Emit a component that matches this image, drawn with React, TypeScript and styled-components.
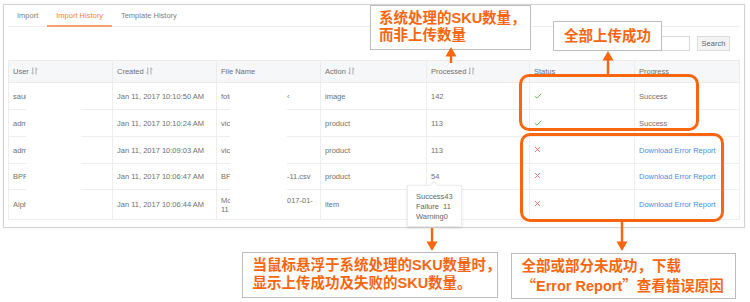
import React from "react";
import styled, { createGlobalStyle, css } from "styled-components";

const ORANGE = "#fa660f";

const GlobalStyle = createGlobalStyle`
    html, body {
        margin: 0;
        padding: 0;
        background: #fff;
    }

    body {
        font-family: "Liberation Sans", Arial, sans-serif;
    }
`;

const Stage = styled.div`
    box-sizing: border-box;
    height: 302px;
    overflow: hidden;
    padding: 4px 0 0 3px;
    position: relative;
    width: 750px;
`;

const Panel = styled.div`
    border: 1px solid #d4d4d4;
    box-shadow: 0 0 2px rgba(0, 0, 0, 0.08);
    box-sizing: border-box;
    display: flex;
    flex-direction: column;
    height: 224px;
    padding: 0 5px 0 4px;
    width: 742px;
`;

const TabBar = styled.div`
    border-bottom: 1px solid #ececec;
    display: flex;
    height: 21px;
`;

const Tab = styled.div<{ $active?: boolean }>`
    border-bottom: 2px solid ${(p) => (p.$active ? "#f9a16a" : "transparent")};
    color: ${(p) => (p.$active ? "#f5853a" : "#808080")};
    font-size: 7.5px;
    line-height: 21px;
    margin-bottom: -1px;
    padding: 0 9px;
`;

const Toolbar = styled.div`
    align-items: center;
    display: flex;
    gap: 7px;
    height: 15px;
    justify-content: flex-end;
    margin-top: 9px;
    padding-right: 9px;
`;

const SearchInput = styled.div`
    border: 1px solid #d9d9d9;
    box-sizing: border-box;
    height: 15px;
    width: 130px;
`;

const SearchButton = styled.button`
    background: #f4f4f4;
    border: 1px solid #dcdcdc;
    box-sizing: border-box;
    color: #666;
    font-family: "Liberation Sans", Arial, sans-serif;
    font-size: 7.5px;
    height: 15px;
    padding: 0;
    width: 33px;
`;

const TableWrap = styled.div`
    margin-top: 9px;
    position: relative;
`;

const Table = styled.table`
    border-collapse: collapse;
    color: #707070;
    font-size: 7.5px;
    table-layout: fixed;
    width: 731px;
`;

const Tr = styled.tr<{ $h: number }>`
    height: ${(p) => p.$h}px;
`;

const Th = styled.th`
    background: #f6f7f9;
    border: 1px solid #ebebeb;
    font-weight: normal;
    padding: 0 4px;
    text-align: left;
    white-space: nowrap;
`;

const Td = styled.td`
    border: 1px solid #eeeeee;
    line-height: 9px;
    padding: 0 4px;
    white-space: nowrap;
`;

const FileCell = styled.div`
    align-items: flex-start;
    display: flex;
`;

const FileHead = styled.span`
    width: 66px;
`;

const ErrorLink = styled.span`
    color: #4a8fe0;
`;

const SortMark = styled.svg`
    margin-left: 2px;
    vertical-align: -1px;
`;

const Redact = styled.div<{ $x: number; $w: number }>`
    background: #fff;
    height: 135px;
    left: ${(p) => p.$x}px;
    position: absolute;
    top: 23px;
    width: ${(p) => p.$w}px;
`;

const Tooltip = styled.div`
    background: #fff;
    border: 1px solid #ececec;
    box-shadow: 0 1px 3px rgba(0, 0, 0, 0.1);
    box-sizing: border-box;
    color: #666;
    font-size: 7.5px;
    height: 42px;
    left: 399px;
    line-height: 10px;
    padding: 6px 0 0 8px;
    position: absolute;
    top: 125px;
    white-space: pre;
    width: 55px;

    &::before {
        background: #fff;
        border-left: 1px solid #ececec;
        border-top: 1px solid #ececec;
        content: "";
        height: 5px;
        left: 23px;
        position: absolute;
        top: -4px;
        transform: rotate(45deg);
        width: 5px;
    }
`;

const noteText = css`
    background: #fff;
    border: 1.5px solid #bdbdbd;
    box-sizing: border-box;
    color: ${ORANGE};
    font-family: "Liberation Sans", "Noto Sans CJK SC", sans-serif;
    font-size: 14.5px;
    font-weight: bold;
    line-height: 17px;
    white-space: nowrap;
`;

// callouts laid over the screenshot
const Callout = styled.div<{ $x: number; $y: number; $w: number; $h: number; $center?: boolean }>`
    ${noteText}
    height: ${(p) => p.$h}px;
    left: ${(p) => p.$x}px;
    padding: 4px 0 0 8px;
    position: absolute;
    top: ${(p) => p.$y}px;
    width: ${(p) => p.$w}px;

    ${(p) =>
        p.$center &&
        css`
            align-items: center;
            display: flex;
            justify-content: center;
            padding: 0;
        `}
`;

// callouts under the panel
const NoteRow = styled.div`
    align-items: flex-start;
    display: flex;
    gap: 13px;
    margin-top: 24px;
    padding-left: 239px;
`;

const Note = styled.div<{ $w: number; $offset?: number }>`
    ${noteText}
    height: 46px;
    line-height: 17.5px;
    margin-top: ${(p) => p.$offset ?? 0}px;
    padding: 4px 0 0 9.5px;
    width: ${(p) => p.$w}px;
`;

const CjkQuote = styled.span`
    font-family: "Noto Sans CJK SC", sans-serif;
`;

const Highlight = styled.div<{ $x: number; $y: number; $w: number; $h: number }>`
    border: 3px solid ${ORANGE};
    border-radius: 10px;
    box-sizing: border-box;
    height: ${(p) => p.$h}px;
    left: ${(p) => p.$x}px;
    position: absolute;
    top: ${(p) => p.$y}px;
    width: ${(p) => p.$w}px;
`;

const ArrowSvg = styled.svg<{ $x: number; $y: number }>`
    left: ${(p) => p.$x - 6}px;
    position: absolute;
    top: ${(p) => p.$y}px;
`;

type ArrowProps = { x: number; tip: number; tail: number };

const Arrow: React.FC<ArrowProps> = ({ x, tip, tail }) => {
    const up = tip < tail;
    const len = Math.abs(tail - tip);
    const top = Math.min(tip, tail);
    return (
        <ArrowSvg $x={x} $y={top} width={12} height={len} viewBox={`0 0 12 ${len}`}>
            {up ? (
                <>
                    <polygon points="6,0 0.5,9.5 11.5,9.5" fill={ORANGE} />
                    <rect x={4.8} y={9} width={2.4} height={len - 9} fill={ORANGE} />
                </>
            ) : (
                <>
                    <rect x={4.8} y={0} width={2.4} height={len - 9} fill={ORANGE} />
                    <polygon points={`6,${len} 0.5,${len - 9.5} 11.5,${len - 9.5}`} fill={ORANGE} />
                </>
            )}
        </ArrowSvg>
    );
};

const Sort = () => (
    <SortMark width={7} height={8} viewBox="0 0 7 8">
        <path d="M1.8 0.5V7.2L0.4 5.6M5 7.5V0.8L6.4 2.4" stroke="#999" strokeWidth={0.8} fill="none" />
    </SortMark>
);

const Check = () => (
    <svg width={8} height={6} viewBox="0 0 8 6">
        <path d="M0.8 3.2L3 5.2L7.2 0.8" stroke="#5cc45c" strokeWidth={1} fill="none" />
    </svg>
);

const Cross = () => (
    <svg width={7} height={7} viewBox="0 0 7 7">
        <path d="M1 1L6 6M6 1L1 6" stroke="#ee6a6a" strokeWidth={0.9} fill="none" />
    </svg>
);

type Row = {
    user: string;
    created: string;
    fileHead: React.ReactNode;
    fileTail: string;
    action: string;
    processed: string;
    ok: boolean;
    h: number;
};

const rows: Row[] = [
    { user: "saumya", created: "Jan 11, 2017 10:10:50 AM", fileHead: "fotos", fileTail: "‹", action: "image", processed: "142", ok: true, h: 27 },
    { user: "admin", created: "Jan 11, 2017 10:10:24 AM", fileHead: "vic", fileTail: "", action: "product", processed: "113", ok: true, h: 27 },
    { user: "admin", created: "Jan 11, 2017 10:09:03 AM", fileHead: "vic", fileTail: "", action: "product", processed: "113", ok: false, h: 27 },
    { user: "BPF", created: "Jan 11, 2017 10:06:47 AM", fileHead: "BF", fileTail: "-11.csv", action: "product", processed: "54", ok: false, h: 26 },
    { user: "Alpha", created: "Jan 11, 2017 10:06:44 AM", fileHead: <>Mo<br />11</>, fileTail: "017-01-", action: "item", processed: "", ok: false, h: 30 },
];

const widths = [104, 104, 104, 106, 103, 105, 105];

const App: React.FC = () => {
    return (
        <Stage>
            <GlobalStyle />
            <Panel>
                <TabBar>
                    <Tab>Import</Tab>
                    <Tab $active>Import History</Tab>
                    <Tab>Template History</Tab>
                </TabBar>
                <Toolbar>
                    <SearchInput />
                    <SearchButton>Search</SearchButton>
                </Toolbar>
                <TableWrap>
                    <Table>
                        <colgroup>
                            {widths.map((w, i) => (
                                <col key={i} style={{ width: w }} />
                            ))}
                        </colgroup>
                        <thead>
                            <Tr $h={22}>
                                <Th>User<Sort /></Th>
                                <Th>Created<Sort /></Th>
                                <Th>File Name</Th>
                                <Th>Action<Sort /></Th>
                                <Th>Processed<Sort /></Th>
                                <Th>Status</Th>
                                <Th>Progress</Th>
                            </Tr>
                        </thead>
                        <tbody>
                            {rows.map((row, i) => (
                                <Tr $h={row.h} key={i}>
                                    <Td>{row.user}</Td>
                                    <Td>{row.created}</Td>
                                    <Td>
                                        <FileCell>
                                            <FileHead>{row.fileHead}</FileHead>
                                            <span>{row.fileTail}</span>
                                        </FileCell>
                                    </Td>
                                    <Td>{row.action}</Td>
                                    <Td>{row.processed}</Td>
                                    <Td>{row.ok ? <Check /> : <Cross />}</Td>
                                    <Td>{row.ok ? "Success" : <ErrorLink>Download Error Report</ErrorLink>}</Td>
                                </Tr>
                            ))}
                        </tbody>
                    </Table>
                    <Redact $x={18} $w={55} />
                    <Redact $x={222} $w={57} />
                    <Tooltip>{"Success43\nFailure  11\nWarning0"}</Tooltip>
                </TableWrap>
            </Panel>

            <NoteRow>
                <Note $w={256}>
                    当鼠标悬浮于系统处理的SKU数量时，
                    <br />
                    显示上传成功及失败的SKU数量。
                </Note>
                <Note $w={225} $offset={1}>
                    全部或部分未成功，下载
                    <br />
                    <CjkQuote>“</CjkQuote>Error Report<CjkQuote>”</CjkQuote>查看错误原因
                </Note>
            </NoteRow>

            <Callout $x={370} $y={5} $w={161} $h={45}>
                系统处理的SKU数量，
                <br />
                而非上传数量
            </Callout>
            <Arrow x={451} tip={47} tail={63} />

            <Callout $x={553} $y={21} $w={109} $h={30} $center>
                全部上传成功
            </Callout>
            <Arrow x={608} tip={51} tail={75} />

            <Highlight $x={519} $y={74} $w={180} $h={57} />
            <Highlight $x={520} $y={133} $w={204} $h={89} />

            <Arrow x={432} tip={251} tail={228} />
            <Arrow x={622} tip={251} tail={222} />
        </Stage>
    );
};

export default App;
